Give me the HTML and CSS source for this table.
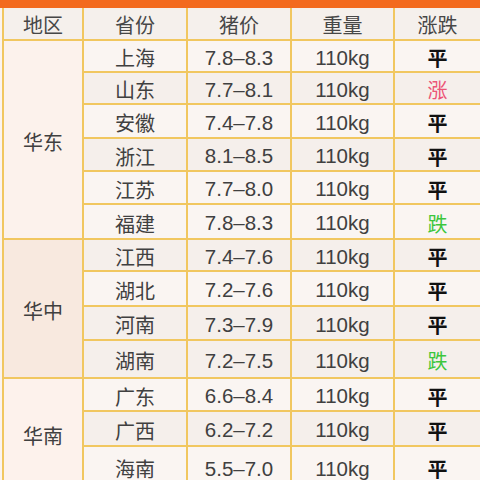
FILE: index.html
```html
<!DOCTYPE html>
<html lang="zh">
<head>
<meta charset="utf-8">
<link rel="stylesheet" href="styles.css">
</head>
<body>
<div class="page">
  <div class="topbar"></div>
  <div class="wrap">
    <div class="table">
      <div class="cell head">地区</div>
      <div class="cell head">省份</div>
      <div class="cell head">猪价</div>
      <div class="cell head">重量</div>
      <div class="cell head">涨跌</div>

      <div class="cell region east span6">华东</div>
      <div class="cell a">上海</div><div class="cell a num">7.8–8.3</div><div class="cell a num">110kg</div><div class="cell a flat">平</div>
      <div class="cell b">山东</div><div class="cell b num">7.7–8.1</div><div class="cell b num">110kg</div><div class="cell b up">涨</div>
      <div class="cell a">安徽</div><div class="cell a num">7.4–7.8</div><div class="cell a num">110kg</div><div class="cell a flat">平</div>
      <div class="cell b">浙江</div><div class="cell b num">8.1–8.5</div><div class="cell b num">110kg</div><div class="cell b flat">平</div>
      <div class="cell a">江苏</div><div class="cell a num">7.7–8.0</div><div class="cell a num">110kg</div><div class="cell a flat">平</div>
      <div class="cell a">福建</div><div class="cell a num">7.8–8.3</div><div class="cell a num">110kg</div><div class="cell a down">跌</div>

      <div class="cell region mid span4">华中</div>
      <div class="cell b">江西</div><div class="cell b num">7.4–7.6</div><div class="cell b num">110kg</div><div class="cell b flat">平</div>
      <div class="cell a">湖北</div><div class="cell a num">7.2–7.6</div><div class="cell a num">110kg</div><div class="cell a flat">平</div>
      <div class="cell b">河南</div><div class="cell b num">7.3–7.9</div><div class="cell b num">110kg</div><div class="cell b flat">平</div>
      <div class="cell b">湖南</div><div class="cell b num">7.2–7.5</div><div class="cell b num">110kg</div><div class="cell b down">跌</div>

      <div class="cell region south span3">华南</div>
      <div class="cell a">广东</div><div class="cell a num">6.6–8.4</div><div class="cell a num">110kg</div><div class="cell a flat">平</div>
      <div class="cell b">广西</div><div class="cell b num">6.2–7.2</div><div class="cell b num">110kg</div><div class="cell b flat">平</div>
      <div class="cell a">海南</div><div class="cell a num">5.5–7.0</div><div class="cell a num">110kg</div><div class="cell a flat">平</div>
    </div>
  </div>
</div>
</body>
</html>
```

FILE: styles.css
```css
html, body {
  margin: 0;
  padding: 0;
  background: #fbf4f0;
}

.page {
  width: 480px;
  height: 480px;
  overflow: hidden;
  font-family: "Liberation Sans", "Noto Sans CJK SC", sans-serif;
}

.topbar {
  height: 8px;
  background: #f36a1e;
}

.wrap {
  padding-left: 2px;
}

.table {
  display: grid;
  grid-template-columns: 78px 102px 102px 101px 1fr;
  grid-template-rows: 31px 30px 30px 32px 31px 31px 33px 30px 33px 32px 36px 31px 33px 40px;
  gap: 2px;
  padding-left: 2px;
  background: #f1c760;
}

.cell {
  display: flex;
  align-items: center;
  justify-content: center;
  padding-top: 3px;
  box-sizing: border-box;
  font-size: 20px;
  color: #404040;
  background: #f9f3ef;
}

.num {
  font-size: 20.5px;
}

.head {
  background: #f5f0ec;
  color: #474747;
  padding-top: 2px;
}

.a { background: #faf5f2; }
.b { background: #f5efeb; }

.region { padding-top: 4px; }
.east { background: #fcf2ec; grid-row: span 6; }
.mid { background: #f8e9df; grid-row: span 4; }
.south { background: #fdf2ec; grid-row: span 3; }

.flat {
  color: #111;
  font-weight: bold;
}

.up {
  color: #ec5577;
}

.down {
  color: #3cc63c;
}
```
